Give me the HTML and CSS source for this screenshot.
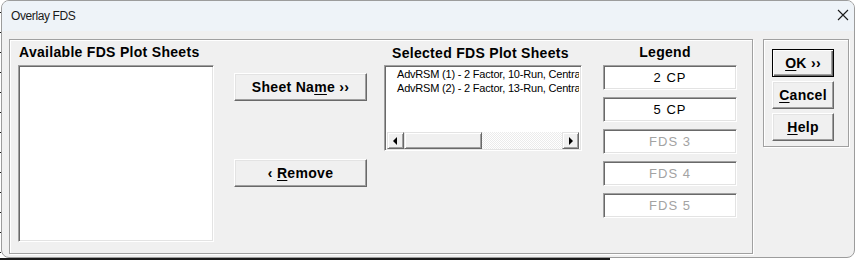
FILE: index.html
```html
<!DOCTYPE html>
<html lang="en">
<head>
  <meta charset="UTF-8" />
  <title>Overlay FDS</title>
  <link rel="stylesheet" href="styles.css">
</head>
<body>
  <div class="janela">
    <div class="barra-titulo">
      <span class="titulo">Overlay FDS</span>
      <svg class="fechar" width="12" height="12" viewBox="0 0 12 12">
        <path d="M1 1 L11 11 M11 1 L1 11" stroke="#1a1a1a" stroke-width="1.1" fill="none"/>
      </svg>
    </div>

    <div class="area">
      <div class="quadro quadro-principal">
        <div class="coluna col-disponiveis">
          <div class="rotulo">Available FDS Plot Sheets</div>
          <div class="lista lista-disponiveis"></div>
        </div>

        <div class="coluna col-mover">
          <button class="botao botao-largo">Sheet Na<u>m</u>e ››</button>
          <button class="botao botao-largo botao-remover">‹ <u>R</u>emove</button>
        </div>

        <div class="coluna col-selecionadas">
          <div class="rotulo rotulo-selecionadas">Selected FDS Plot Sheets</div>
          <div class="lista lista-selecionadas">
            <div class="itens">
              <div class="item">AdvRSM (1) - 2 Factor, 10-Run, Centra</div>
              <div class="item">AdvRSM (2) - 2 Factor, 13-Run, Centra</div>
            </div>
            <div class="rolagem">
              <div class="seta"><span class="tri tri-esq"></span></div>
              <div class="polegar"></div>
              <div class="trilho"></div>
              <div class="seta"><span class="tri tri-dir"></span></div>
            </div>
          </div>
        </div>

        <div class="coluna col-legenda">
          <div class="rotulo rotulo-legenda">Legend</div>
          <div class="caixa">2 CP</div>
          <div class="caixa">5 CP</div>
          <div class="caixa desativada">FDS 3</div>
          <div class="caixa desativada">FDS 4</div>
          <div class="caixa desativada">FDS 5</div>
        </div>
      </div>

      <div class="quadro quadro-acoes">
        <button class="botao botao-acao padrao"><u>O</u>K ››</button>
        <button class="botao botao-acao"><u>C</u>ancel</button>
        <button class="botao botao-acao"><u>H</u>elp</button>
      </div>
    </div>
  </div>
</body>
</html>
```

FILE: styles.css
```css
body {
  margin: 0;
  width: 855px;
  height: 260px;
  overflow: hidden;
  background-color: #ffffff;
  background-image:
    repeating-linear-gradient(to bottom, #1a1a1a 0 1px, transparent 1px 20px),
    linear-gradient(#1a1a1a, #1a1a1a);
  background-size: 1px 100%, 610px 2px;
  background-position: 0 12px, 0 258px;
  background-repeat: no-repeat;
  font-family: 'Liberation Sans', Arial, sans-serif;
}

.janela {
  box-sizing: border-box;
  margin-left: 1px;
  width: 854px;
  height: 258px;
  border: 1px solid #9c9c9c;
  border-radius: 8px;
  background-color: #f0f0f0;
  overflow: hidden;
}

.barra-titulo {
  height: 30px;
  background-color: #eef3f8;
  display: flex;
  align-items: center;
  justify-content: space-between;
  padding: 0 4px 0 9px;
}

.titulo {
  font-size: 12px;
  letter-spacing: -0.4px;
  color: #1a1a1a;
  margin-top: -1px;
}

.fechar {
  margin-right: 1px;
  margin-top: -2px;
}

.area {
  display: flex;
  align-items: flex-start;
  gap: 10px;
  padding: 8px 0 0 7px;
}

.quadro {
  box-sizing: border-box;
  border: 1px solid #a0a0a0;
  box-shadow: inset 1px 1px #ffffff, 1px 1px #ffffff;
}

.quadro-principal {
  width: 744px;
  height: 215px;
  display: flex;
  align-items: flex-start;
}

.coluna {
  display: flex;
  flex-direction: column;
}

.rotulo {
  font-size: 14px;
  font-weight: bold;
  letter-spacing: 0.3px;
  line-height: 16px;
  height: 16px;
  margin-top: 4px;
  margin-bottom: 5px;
  white-space: nowrap;
  color: #000;
}

.col-disponiveis {
  margin-left: 8px;
  width: 196px;
}

.col-disponiveis .rotulo {
  padding-left: 1px;
}

.lista {
  box-sizing: border-box;
  background-color: #ffffff;
  border: 1px solid;
  border-color: #a0a0a0 #ffffff #ffffff #a0a0a0;
  box-shadow: inset 1px 1px #696969, inset -1px -1px #e3e3e3;
}

.lista-disponiveis {
  height: 177px;
}

.col-mover {
  margin-left: 20px;
  width: 133px;
  padding-top: 33px;
}

.botao {
  box-sizing: border-box;
  font-family: 'Liberation Sans', Arial, sans-serif;
  font-size: 14px;
  font-weight: bold;
  letter-spacing: 0.3px;
  color: #000;
  background-color: #f0f0f0;
  border: 1px solid;
  border-color: #ffffff #696969 #696969 #ffffff;
  box-shadow: inset -1px -1px #a0a0a0, inset 1px 1px #e3e3e3;
  padding: 0;
  cursor: pointer;
  white-space: nowrap;
}

.botao u {
  text-underline-offset: 2px;
}

.botao-largo {
  width: 133px;
  height: 28px;
}

.botao-remover {
  margin-top: 58px;
}

.col-selecionadas {
  margin-left: 17px;
  width: 198px;
}

.rotulo-selecionadas {
  padding-left: 8px;
  margin-top: 5px;
  margin-bottom: 4px;
}

.lista-selecionadas {
  height: 86px;
  display: flex;
  flex-direction: column;
  padding: 1px 2px 1px 2px;
}

.itens {
  flex: 1;
  overflow: hidden;
  padding: 0 0 0 10px;
}

.item {
  font-size: 11px;
  letter-spacing: -0.2px;
  line-height: 14px;
  white-space: nowrap;
  color: #000;
}

.rolagem {
  height: 17px;
  display: flex;
}

.seta,
.polegar {
  box-sizing: border-box;
  height: 17px;
  background-color: #f0f0f0;
  border: 1px solid;
  border-color: #e3e3e3 #696969 #696969 #e3e3e3;
  box-shadow: inset 1px 1px #ffffff, inset -1px -1px #a0a0a0;
}

.seta {
  width: 17px;
  display: flex;
  align-items: center;
  justify-content: center;
}

.polegar {
  width: 78px;
}

.trilho {
  flex: 1;
  background-color: #f7f7f7;
  background-image: repeating-conic-gradient(#ffffff 0 25%, #ebebeb 0 50%);
  background-size: 2px 2px;
}

.tri {
  width: 0;
  height: 0;
  border-top: 4px solid transparent;
  border-bottom: 4px solid transparent;
}

.tri-esq {
  border-right: 4px solid #000;
  margin-left: -1px;
}

.tri-dir {
  border-left: 4px solid #000;
  margin-left: 1px;
}

.col-legenda {
  margin-left: 21px;
  width: 134px;
  gap: 7px;
}

.rotulo-legenda {
  text-align: center;
  padding-right: 10px;
  margin-bottom: -2px;
}

.caixa {
  box-sizing: border-box;
  height: 25px;
  background-color: #ffffff;
  border: 1px solid;
  border-color: #a0a0a0 #ffffff #ffffff #a0a0a0;
  box-shadow: inset 1px 1px #696969, inset -1px -1px #e3e3e3;
  font-size: 13px;
  letter-spacing: 1px;
  line-height: 23px;
  text-align: center;
  color: #000;
}

.caixa.desativada {
  color: #a3a3a3;
}

.quadro-acoes {
  width: 86px;
  height: 108px;
  padding: 9px 0 0 8px;
  display: flex;
  flex-direction: column;
  gap: 4px;
}

.botao-acao {
  width: 62px;
  height: 28px;
}

.padrao {
  border-color: #000;
  box-shadow: inset 1px 1px #ffffff, inset -1px -1px #696969, inset -2px -2px #a0a0a0;
}
```
